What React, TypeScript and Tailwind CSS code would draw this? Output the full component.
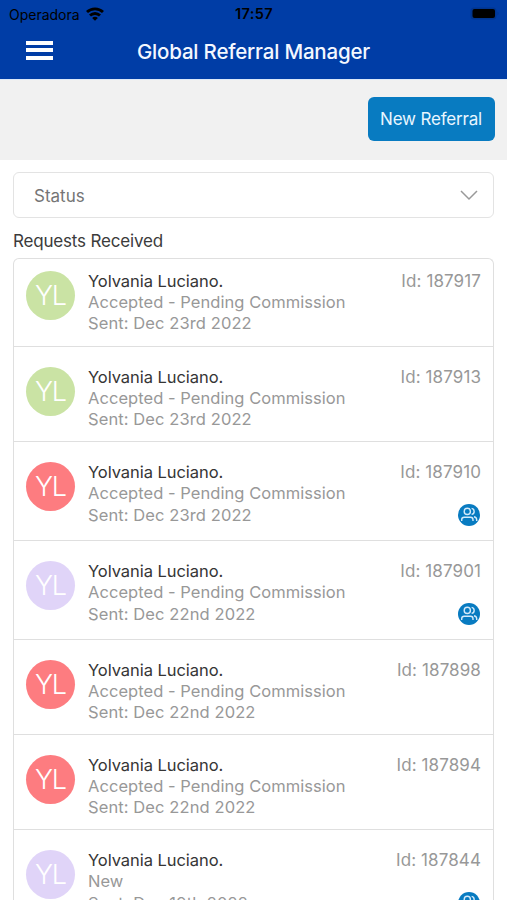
import clsx from "clsx";

type Referral = {
  id: string;
  status: string;
  sent: string;
  avatar: string;
  shared?: boolean;
};

const referrals: Referral[] = [
  { id: "187917", status: "Accepted - Pending Commission", sent: "Dec 23rd 2022", avatar: "bg-[#cae3a4]" },
  { id: "187913", status: "Accepted - Pending Commission", sent: "Dec 23rd 2022", avatar: "bg-[#cae3a4]" },
  { id: "187910", status: "Accepted - Pending Commission", sent: "Dec 23rd 2022", avatar: "bg-[#fd7c80]", shared: true },
  { id: "187901", status: "Accepted - Pending Commission", sent: "Dec 22nd 2022", avatar: "bg-[#e0d4f8]", shared: true },
  { id: "187898", status: "Accepted - Pending Commission", sent: "Dec 22nd 2022", avatar: "bg-[#fd7c80]" },
  { id: "187894", status: "Accepted - Pending Commission", sent: "Dec 22nd 2022", avatar: "bg-[#fd7c80]" },
  { id: "187844", status: "New", sent: "Dec 19th 2022", avatar: "bg-[#e0d4f8]", shared: true },
];

function WifiIcon() {
  return (
    <svg width="18" height="14" viewBox="0 0 18 14" fill="none" stroke="black" strokeWidth="2.8">
      <path d="M1 5.100c4.400-4.400 11.600-4.400 16 0" />
      <path d="M4 8.600c2.800-2.800 7.200-2.800 10 0" />
      <path d="M9 13.800 6.100 10.900c1.600-1.600 4.200-1.600 5.800 0Z" fill="black" stroke="none" />
    </svg>
  );
}

function SharedIcon() {
  return (
    <svg width="22" height="22" viewBox="0 0 22 22" fill="none" stroke="#d5eafa" strokeWidth="1.400">
      <circle cx="11" cy="11" r="11" fill="#087bc1" stroke="none" />
      <circle cx="9.300" cy="7.400" r="3.100" />
      <path d="M13.600 4.400c3.400.5 3.400 5.500 0 6" />
      <path d="M3.700 17v-1.200c0-1.500 1-2.500 2.500-2.500h6.300c1.500 0 2.500 1 2.500 2.500V17" />
      <path d="M16 12.700c1.700.4 2.700 1.600 2.700 3.100V17" />
    </svg>
  );
}

function StatusBar() {
  return (
    <div className="grid h-7 grid-cols-3 items-center pr-2 pl-[9px] text-[14px] text-black">
      <div className="flex items-center gap-1.5 tracking-[-0.020px]">
        Operadora
        <WifiIcon />
      </div>
      <div className="text-center text-[14.500px] font-semibold tracking-[0.400px]">17:57</div>
      <div className="flex justify-end">
        <svg width="29" height="14" viewBox="0 0 29 14">
          <rect x="0.500" y="0.500" width="26" height="12" rx="3.500" fill="#00358f" />
          <rect x="2.500" y="2" width="22.500" height="9" rx="2" fill="black" />
          <path d="M27.500 4.500c1.300.6 1.300 3.400 0 4Z" fill="#00358f" />
        </svg>
      </div>
    </div>
  );
}

function ReferralRow({ referral, first }: { referral: Referral; first: boolean }) {
  return (
    <li
      className={clsx(
        "flex shrink-0 border-b border-[#dfdfdf] pr-3 pl-3",
        first ? "h-[88px] pt-3" : "pt-5",
        !first && (referral.shared ? "h-[99px]" : "h-[95px]"),
      )}
    >
      <div
        className={clsx(
          "flex size-[49px] shrink-0 items-center justify-center rounded-full pt-0.5 text-[27px] font-light tracking-[-1px] text-white",
          referral.avatar,
        )}
      >
        YL
      </div>
      <div className="ml-[13px] flex-1 text-[16.500px] leading-[21px] text-[#989898]">
        <div className="flex justify-between">
          <span className="tracking-[-0.060px] text-[#353535]">Yolvania Luciano.</span>
          <span className="text-[17px] tracking-[0.100px]">Id: {referral.id}</span>
        </div>
        <div className="tracking-[0.050px]">{referral.status}</div>
        <div className="flex items-center justify-between">
          <span className="tracking-[0.100px]">Sent: {referral.sent}</span>
          {referral.shared && (
            <span className="mr-px">
              <SharedIcon />
            </span>
          )}
        </div>
      </div>
    </li>
  );
}

export default function App() {
  return (
    <div className="flex h-[900px] w-[507px] flex-col overflow-hidden bg-white font-[Inter,sans-serif]">
      <header className="h-[79px] shrink-0 bg-[#003da6]">
        <StatusBar />
        <div className="grid h-[48px] grid-cols-[1fr_auto_1fr] items-center px-[26px]">
          <button type="button" aria-label="Menu" className="flex w-[27px] flex-col gap-[3.500px] pb-1">
            <span className="h-1 w-full bg-white" />
            <span className="h-1 w-full bg-white" />
            <span className="h-1 w-full bg-white" />
          </button>
          <h1 className="text-[20.500px] font-[550] tracking-[-0.200px] text-[#f4f8ff]">Global Referral Manager</h1>
        </div>
      </header>

      <div className="flex h-[81px] shrink-0 items-center justify-end border-t border-[#dce8f8] bg-[#f1f1f1] pr-[12.500px] pb-0.5">
        <button type="button" className="h-11 w-[127px] rounded-md bg-[#087bc1] pt-0.5 text-[17px] tracking-[-0.180px] text-[#e8f6ff]">
          New Referral
        </button>
      </div>

      <main className="flex min-h-0 flex-1 flex-col px-[13px] pt-3">
        <div className="flex h-[46px] shrink-0 items-center justify-between rounded-md border-[1.500px] border-[#e3e3e3] pt-[3px] pr-[15px] pl-5 text-[17px] text-[#757575]">
          Status
          <svg width="18" height="11" viewBox="0 0 18 11" fill="none" stroke="#999" strokeWidth="1.500" className="mb-0.5">
            <path d="m1 1 8 8 8-8" />
          </svg>
        </div>
        <h2 className="mt-[11px] text-[17px] leading-6 tracking-[-0.180px] text-[#3b3b3b]">Requests Received</h2>
        <ul className="mt-[5px] flex min-h-0 flex-1 flex-col overflow-hidden rounded-t-md border border-b-0 border-[#dfdfdf]">
          {referrals.map((referral, i) => (
            <ReferralRow key={referral.id} referral={referral} first={i === 0} />
          ))}
        </ul>
      </main>
    </div>
  );
}
